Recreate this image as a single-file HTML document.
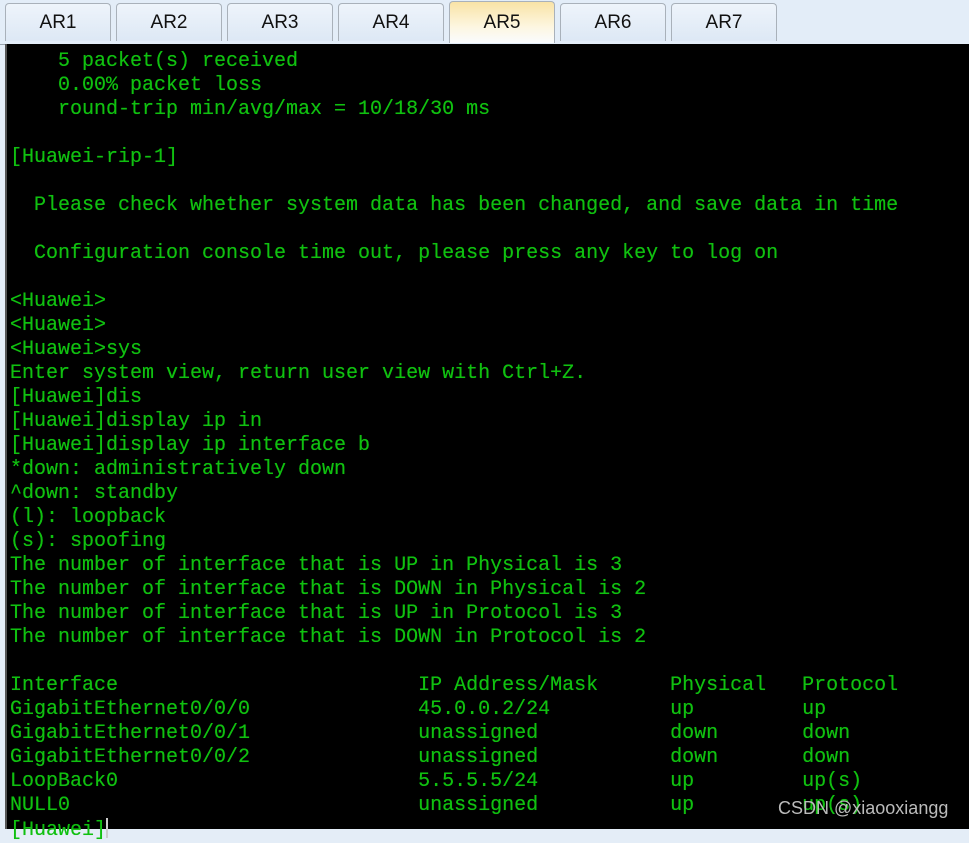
<!DOCTYPE html>
<html><head><meta charset="utf-8"><style>
html,body{margin:0;padding:0;width:969px;height:829px;overflow:hidden;background:#e4edf7;}
.bar{position:absolute;left:0;top:0;width:969px;height:44px;background:#e3edf8;border-bottom:1px solid #9aa4ae;}
.tab{position:absolute;top:3px;width:106px;height:38px;border:1px solid #a9b1ba;border-bottom:none;border-radius:4px 4px 0 0;background:linear-gradient(#eef4fb,#dde8f5);font:19px "Liberation Sans",sans-serif;color:#111;text-align:center;line-height:38px;box-sizing:border-box;}
.tab.act{background:linear-gradient(#f9e3a6,#fdf6e0 60%,#fafcff);top:1px;height:42px;line-height:42px;}
.term{position:absolute;left:5px;top:44px;width:964px;height:785px;background:#000;border-left:2px solid #555;}
pre{margin:0;position:absolute;left:3px;top:6px;font:20px/24px "Liberation Mono",monospace;color:#10c010;text-shadow:0 0 0.4px #10c010;}
.wm{position:absolute;left:778px;top:798px;font:18px "Liberation Sans",sans-serif;color:#bbb;}
.cur{display:inline-block;width:2px;height:20px;background:#ccc;vertical-align:-3px;}
</style></head><body>
<div class="bar">
<div class="tab" style="left:5px">AR1</div>
<div class="tab" style="left:116px">AR2</div>
<div class="tab" style="left:227px">AR3</div>
<div class="tab" style="left:338px">AR4</div>
<div class="tab act" style="left:449px">AR5</div>
<div class="tab" style="left:560px">AR6</div>
<div class="tab" style="left:671px">AR7</div>
</div>
<div class="term"><pre>    5 packet(s) received
    0.00% packet loss
    round-trip min/avg/max = 10/18/30 ms

[Huawei-rip-1]

  Please check whether system data has been changed, and save data in time

  Configuration console time out, please press any key to log on

&lt;Huawei&gt;
&lt;Huawei&gt;
&lt;Huawei&gt;sys
Enter system view, return user view with Ctrl+Z.
[Huawei]dis
[Huawei]display ip in
[Huawei]display ip interface b
*down: administratively down
^down: standby
(l): loopback
(s): spoofing
The number of interface that is UP in Physical is 3
The number of interface that is DOWN in Physical is 2
The number of interface that is UP in Protocol is 3
The number of interface that is DOWN in Protocol is 2

Interface                         IP Address/Mask      Physical   Protocol
GigabitEthernet0/0/0              45.0.0.2/24          up         up
GigabitEthernet0/0/1              unassigned           down       down
GigabitEthernet0/0/2              unassigned           down       down
LoopBack0                         5.5.5.5/24           up         up(s)
NULL0                             unassigned           up         up(s)
[Huawei]<span class="cur"></span></pre></div>
<div class="wm">CSDN @xiaooxiangg</div>
</body></html>
